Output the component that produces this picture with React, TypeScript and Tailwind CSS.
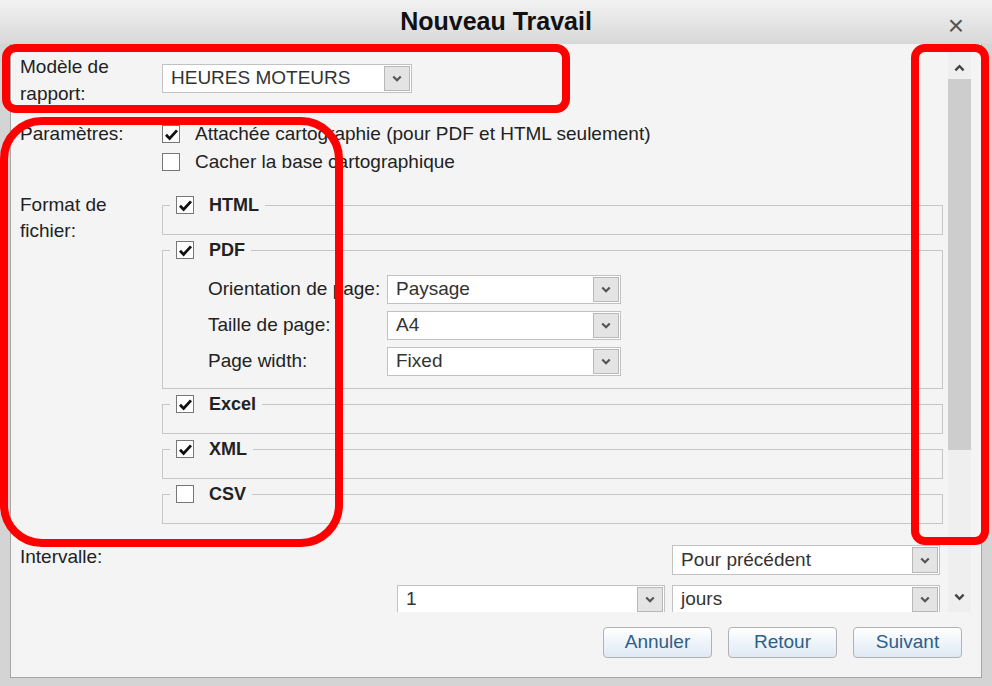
import type { ReactNode } from "react";

function Chevron({ up = false, className = "" }: { up?: boolean; className?: string }) {
  return (
    <svg width="12" height="8" viewBox="0 0 12 8" className={className}>
      <path
        d={up ? "M1.5 6.5 L6 2 L10.5 6.5" : "M1.5 1.5 L6 6 L10.5 1.5"}
        fill="none"
        stroke="currentColor"
        strokeWidth="2.6"
      />
    </svg>
  );
}

function Select({ value, className = "" }: { value: string; className?: string }) {
  return (
    <div className={`flex h-[29px] items-stretch border border-[#c2c2c2] bg-white ${className}`}>
      <div className="flex flex-1 items-center truncate pl-[8px] text-[19px] text-[#333]">{value}</div>
      <div className="m-[1px] flex w-[26px] items-center justify-center border border-[#b8b8b8] bg-[#e4e4e4] text-[#555]">
        <Chevron className="h-[7px] w-[10px]" />
      </div>
    </div>
  );
}

function Check({ on }: { on: boolean }) {
  return (
    <div className="flex h-[18px] w-[18px] shrink-0 items-center justify-center border border-[#777] bg-white">
      {on && (
        <svg width="15" height="13" viewBox="0 0 15 13">
          <path d="M2 6.8 L5.6 10.4 L13 2.4" fill="none" stroke="#111" strokeWidth="2.8" />
        </svg>
      )}
    </div>
  );
}

function Group({ label, on, bodyClass, children }: { label: string; on: boolean; bodyClass: string; children?: ReactNode }) {
  return (
    <div>
      <div className="flex h-[22px] items-center">
        <div className="h-[11px] w-[8px] self-end border-l border-t border-[#c6c6c6]" />
        <div className="flex items-center gap-[15px] px-[6px]">
          <Check on={on} />
          <span className="text-[18px] font-bold text-[#222]">{label}</span>
        </div>
        <div className="h-[11px] flex-1 self-end border-r border-t border-[#c6c6c6]" />
      </div>
      <div className={`border-b border-l border-r border-[#c6c6c6] ${bodyClass}`}>{children}</div>
    </div>
  );
}

export default function App() {
  return (
    <div className="relative h-[686px] w-[992px] overflow-hidden bg-[#d4d4d4] font-['Liberation_Sans',Arial,sans-serif] text-[#222]">
      {/* title bar */}
      <div className="relative flex h-[44px] items-center justify-center bg-gradient-to-b from-[#f2f2f2] to-[#d8d8d8]">
        <span className="text-[25px] font-bold text-[#111]">Nouveau Travail</span>
        <span className="absolute right-[28px] top-[5px] text-[28px] font-light text-[#555]">×</span>
      </div>

      <div className="mx-[10px] h-[634px] border-b border-l border-r border-[#a6a6a6] bg-[#f4f4f4]">
        <div className="flex h-[568px]">
          <div className="flex-1 overflow-hidden pl-[9px] pr-[5px]">
            {/* modèle */}
            <div className="mt-[9px] flex">
              <div className="w-[142px] text-[19px] leading-[27px]">
                Modèle de
                <br />
                rapport:
              </div>
              <Select value="HEURES MOTEURS" className="mt-[11px] w-[250px]" />
            </div>

            {/* paramètres */}
            <div className="mt-[13px] flex">
              <div className="w-[142px] text-[19px] leading-[28px]">Paramètres:</div>
              <div>
                <div className="flex h-[28px] items-center gap-[15px]">
                  <Check on />
                  <span className="text-[19px]">Attachée cartographie (pour PDF et HTML seulement)</span>
                </div>
                <div className="flex h-[28px] items-center gap-[15px]">
                  <Check on={false} />
                  <span className="text-[19px]">Cacher la base cartographique</span>
                </div>
              </div>
            </div>

            {/* format */}
            <div className="mt-[16px] flex">
              <div className="w-[142px] text-[19px] leading-[26px]">
                Format de
                <br />
                fichier:
              </div>
              <div className="mt-[2px] flex-1">
                <Group label="HTML" on bodyClass="h-[19px]" />
                <div className="mt-[4px]">
                  <Group label="PDF" on bodyClass="pt-[14px] pb-[12px] pl-[45px]">
                    <div className="flex flex-col gap-[7px]">
                      {[
                        ["Orientation de page:", "Paysage"],
                        ["Taille de page:", "A4"],
                        ["Page width:", "Fixed"],
                      ].map(([l, v]) => (
                        <div key={l} className="flex items-center">
                          <span className="w-[179px] text-[19px]">{l}</span>
                          <Select value={v} className="w-[234px]" />
                        </div>
                      ))}
                    </div>
                  </Group>
                </div>
                <div className="mt-[4px]">
                  <Group label="Excel" on bodyClass="h-[19px]" />
                </div>
                <div className="mt-[4px]">
                  <Group label="XML" on bodyClass="h-[19px]" />
                </div>
                <div className="mt-[4px]">
                  <Group label="CSV" on={false} bodyClass="h-[19px]" />
                </div>
              </div>
            </div>

            {/* intervalle */}
            <div className="mt-[20px] flex pr-[3px]">
              <div className="w-[142px] text-[19px] leading-[26px]">Intervalle:</div>
              <div className="flex flex-1 flex-col items-end gap-[10px]">
                <Select value="Pour précédent" className="mt-[1px] h-[30px] w-[268px]" />
                <div className="flex gap-[7px]">
                  <Select value="1" className="w-[268px]" />
                  <Select value="jours" className="w-[268px]" />
                </div>
              </div>
            </div>
          </div>

          {/* scrollbar */}
          <div className="mr-[10px] flex w-[23px] flex-col items-center bg-[#efefef]">
            <div className="flex h-[35px] items-center justify-center pt-[12px] text-[#444]">
              <Chevron up className="h-[8px] w-[11px]" />
            </div>
            <div className="h-[371px] w-full bg-[#cdcdcd]" />
            <div className="flex-1" />
            <div className="flex h-[30px] items-center justify-center text-[#444]">
              <Chevron className="h-[8px] w-[11px]" />
            </div>
          </div>
        </div>

        {/* buttons */}
        <div className="flex justify-end gap-[16px] pr-[19px] pt-[15px]">
          {["Annuler", "Retour", "Suivant"].map((b) => (
            <button
              key={b}
              className="flex h-[31px] w-[109px] items-center justify-center rounded-[4px] border border-[#b2b2b2] bg-gradient-to-b from-[#ffffff] to-[#dfe9f4] text-[19px] text-[#2b5f8c]"
            >
              {b}
            </button>
          ))}
        </div>
      </div>

      {/* red annotations */}
      <div className="pointer-events-none absolute left-[2px] top-[44px] h-[69px] w-[568px] rounded-[14px] border-[8px] border-[#ff0000]" />
      <div className="pointer-events-none absolute left-[0px] top-[117px] h-[430px] w-[343px] rounded-[42px] border-[8px] border-[#ff0000]" />
      <div className="pointer-events-none absolute left-[911px] top-[44px] h-[501px] w-[78px] rounded-[14px] border-[8px] border-[#ff0000]" />
    </div>
  );
}
